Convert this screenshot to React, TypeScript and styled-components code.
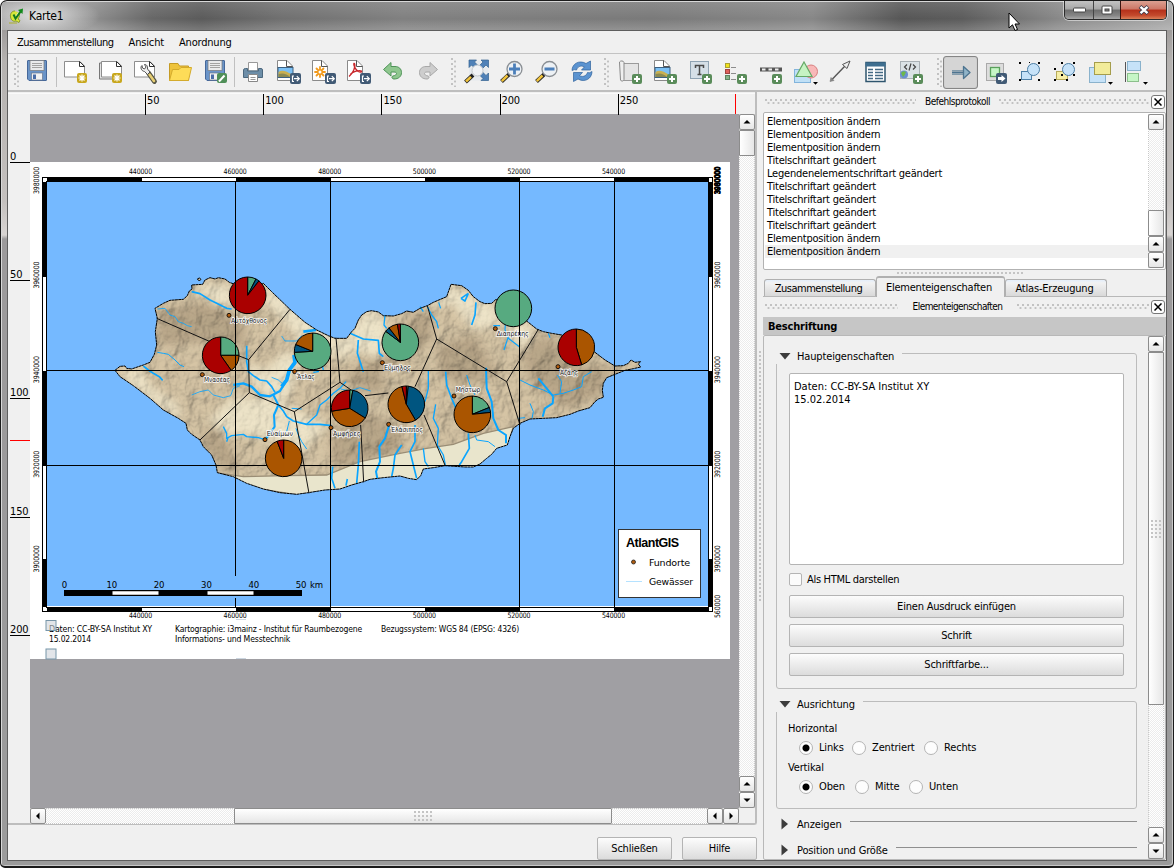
import React from "react";
import styled, { createGlobalStyle, css } from "styled-components";

const UI_FONT = `"DejaVu Sans Condensed", "DejaVu Sans", sans-serif`;

const Global = createGlobalStyle`
  * { box-sizing: border-box; }
  html, body { margin: 0; padding: 0; overflow: hidden; }
  body { font-family: ${UI_FONT}; font-stretch: condensed; font-size: 11px; color: #000; letter-spacing: -0.15px; }
  svg { display: block; }
`;

/* ---------- window chrome ---------- */

const Window = styled.div`
  width: 1174px;
  height: 868px;
  position: relative;
  display: flex;
  flex-direction: column;
  padding: 0 8px 5px 8px;
  background: linear-gradient(#8b8888 0, #b5b2b0 60px, #c4c0be 200px, #d8d4d2 234px, #9c9a9b 238px, #9b9b9b 100%);
  border: 1px solid #1b1b1b;
  border-width: 1px 1px 2px 1px;
  border-radius: 7px 7px 5px 5px;
  box-shadow: inset 1px 1px 0 #d8d8d8, inset -1px -1px 0 #c8c8c8;
  overflow: hidden;
`;

const TitleBar = styled.div`
  height: 28px;
  flex: none;
  margin: 1px -7px 0 -7px;
  padding-left: 7px;
  display: flex;
  align-items: center;
  background:
    radial-gradient(ellipse 60px 20px at 38px 14px, rgba(255, 255, 255, 0.75), rgba(255, 255, 255, 0)),
    linear-gradient(rgba(255, 255, 255, 0.12), rgba(255, 255, 255, 0) 60%, rgba(255, 255, 255, 0.18)),
    linear-gradient(90deg, #9a9a9a 0, #8f8f8f 90px, #676767 150px, #5b5b5b 200px, #707070 280px, #808080 400px, #7a7a7a 650px, #878787 810px, #565656 900px, #5c5c5c 960px, #8a8a8a 1060px, #a8a8a8 1174px);
`;

const TitleText = styled.span`
  font-size: 12px;
  letter-spacing: -0.2px;
  margin-left: 4px;
`;

const WindowButtons = styled.div`
  position: absolute;
  top: 0;
  right: 6px;
  display: flex;
  height: 19px;
  border: 1px solid #2b2b2b;
  border-top: 0;
  border-radius: 0 0 5px 5px;
  overflow: hidden;
  box-shadow: 0 0 0 1px rgba(255, 255, 255, 0.5);
`;

const WindowButton = styled.div<{ $w: number; $close?: boolean }>`
  width: ${(p) => p.$w}px;
  display: flex;
  align-items: center;
  justify-content: center;
  border-left: 1px solid ${(p) => (p.$close ? "#3b1510" : "#444")};
  background: ${(p) =>
    p.$close
      ? "linear-gradient(#dba091 0, #cd7766 45%, #b5301a 50%, #c44a2d 80%, #dc8058 100%)"
      : "linear-gradient(#c3c3c3 0, #a6a6a6 45%, #6e6e6e 50%, #858585 80%, #a9a9a9 100%)"};
  &:first-child { border-left: 0; }
`;

const Cursor = styled.div`
  position: absolute;
  left: 1007px;
  top: 11px;
`;

const Client = styled.div`
  flex: 1;
  min-height: 0;
  display: flex;
  flex-direction: column;
  background: #f0f0f0;
  border: 1px solid #5e5e5e;
  border-width: 1px 1px 1px 0;
  margin: 0 -2px 0 -1px;
  box-shadow: -1px 0 0 #5e5e5e;
`;

const MenuBar = styled.div`
  height: 23px;
  flex: none;
  display: flex;
  align-items: center;
  gap: 15px;
  padding: 1px 0 0 9px;
  border-bottom: 1px solid #c3c3c3;
`;

const MenuItem = styled.span<{ $track?: number }>`
  letter-spacing: ${(p) => p.$track ?? -0.15}px;
`;

/* ---------- tool bar ---------- */

const ToolBar = styled.div`
  height: 38px;
  flex: none;
  display: flex;
  align-items: center;
  padding-left: 6px;
  border-bottom: 2px solid #bebebe;
`;

const Grip = styled.div<{ $before: number; $after?: number }>`
  width: 5px;
  height: 29px;
  flex: none;
  margin-left: ${(p) => p.$before}px;
  margin-right: ${(p) => p.$after ?? 0}px;
  background-image: radial-gradient(circle at 1px 1px, #c2c2c2 1px, transparent 1.2px),
    radial-gradient(circle at 4px 3.5px, #c2c2c2 1px, transparent 1.2px);
  background-size: 5px 5px;
`;

const Separator = styled.div`
  width: 1px;
  height: 30px;
  flex: none;
  margin: 0 1px;
  background: #c0c0c0;
`;

const ToolButton = styled.div<{ $active?: boolean }>`
  width: 35px;
  height: 33px;
  padding-right: 1px;
  flex: none;
  display: flex;
  align-items: center;
  justify-content: center;
  border-radius: 3px;
  ${(p) =>
    p.$active &&
    css`
      border: 1px solid #858585;
      background: #d5d5d5;
      box-shadow: inset 0 0 1px #999;
    `}
`;

const Body = styled.div`
  flex: 1;
  min-height: 0;
  display: flex;
`;

/* ---------- left side ---------- */

const LeftSide = styled.div`
  width: 749px;
  flex: none;
  display: flex;
  flex-direction: column;
`;

const ViewPanel = styled.div`
  height: 733px;
  flex: none;
  display: grid;
  grid-template-columns: 22px 709px 16px;
  grid-template-rows: 22px 694px 16px;
  border-right: 2px solid #bdbdbd;
  border-bottom: 2px solid #bdbdbd;
  border-radius: 0 0 3px 0;
`;

const MapSheetArea = styled.div`
  background: #a09fa3;
  overflow: hidden;
`;

const HRuler = styled.div`
  grid-column: 1 / -1;
  height: 20px;
  margin-top: 1px;
  padding-left: 137px;
  display: flex;
  position: relative;
  border-top: 1px solid #fafafa;
`;

const HTick = styled.div`
  width: 118.2px;
  flex: none;
  height: 21px;
  padding: 0 0 0 1px;
  line-height: 13px;
  border-left: 1px solid #000;
`;

const HCursorMark = styled.div`
  position: absolute;
  left: 727px;
  top: 0;
  width: 1px;
  height: 20px;
  background: #f00;
`;

const VRuler = styled.div`
  position: relative;
  padding-left: 2px;
`;

const VTick = styled.div<{ $first?: boolean }>`
  height: ${(p) => (p.$first ? 49 : 118.2)}px;
  display: flex;
  align-items: flex-end;
  line-height: 11px;
  border-bottom: 1px solid #000;
`;

const VCursorMark = styled.div`
  position: absolute;
  left: 2px;
  top: 326px;
  width: 20px;
  height: 1px;
  background: #f00;
`;

const trackFill = css`
  background: repeating-conic-gradient(#fff 0 25%, #ececec 0 50%) 0 0 / 2px 2px;
`;

const VScroll = styled.div`
  width: 16px;
  height: 100%;
  flex: none;
  display: flex;
  flex-direction: column;
  ${trackFill}
  border-left: 1px dotted #c9c9c9;
  border-right: 1px dotted #c9c9c9;
`;

const HScroll = styled.div`
  grid-column: 2;
  height: 16px;
  display: flex;
  ${trackFill}
  border-top: 1px dotted #c9c9c9;
  border-bottom: 1px dotted #c9c9c9;
`;

const ScrollButton = styled.div<{ $h?: boolean }>`
  width: 16px;
  height: 16px;
  flex: none;
  margin: ${(p) => (p.$h ? "-1px 0" : "0 -1px")};
  display: flex;
  align-items: center;
  justify-content: center;
  border: 1px solid #8c8c8c;
  border-radius: 2px;
  background: linear-gradient(#fff, #e6e6e6);
`;

const Thumb = styled.div<{ $len: number; $h?: boolean }>`
  flex: none;
  ${(p) => (p.$h ? `width: ${p.$len}px; margin: -1px 0;` : `height: ${p.$len}px; margin: 0 -1px;`)}
  display: flex;
  align-items: center;
  justify-content: center;
  border: 1px solid #8c8c8c;
  border-radius: 1px;
  background: linear-gradient(${(p) => (p.$h ? "180deg" : "90deg")}, #fff, #e6e6e6);
`;

const Space = styled.div<{ $size?: number }>`
  flex: ${(p) => (p.$size === undefined ? "1" : `0 0 ${p.$size}px`)};
`;

const Knurl = styled.div<{ $w: number; $h: number }>`
  width: ${(p) => p.$w}px;
  height: ${(p) => p.$h}px;
  background: radial-gradient(circle at 1px 1px, #c4c4c4 1px, transparent 1.2px) 0 0 / 4px 4px;
`;

const DialogButtons = styled.div`
  flex: 1;
  display: flex;
  justify-content: flex-end;
  align-items: flex-end;
  gap: 10px;
`;

const Button = styled.button<{ $w?: number }>`
  width: ${(p) => (p.$w ? `${p.$w}px` : "100%")};
  height: 23px;
  display: block;
  padding: 0;
  font: inherit;
  letter-spacing: -0.2px;
  color: #000;
  border: 1px solid #b4b4b4;
  border-radius: 2px;
  background: linear-gradient(#fcfcfc, #ececec 50%, #dcdcdc);
`;

/* ---------- right side ---------- */

const SplitterV = styled.div`
  width: 6px;
  flex: none;
  display: flex;
  align-items: center;
  justify-content: center;
`;

const Dock = styled.div`
  flex: 1;
  min-width: 0;
  display: flex;
  flex-direction: column;
`;

const DockTitle = styled.div`
  height: 20px;
  flex: none;
  display: flex;
  align-items: center;
  font-size: 10px;
  padding: 0 1px 1px 2px;
`;

const DockDots = styled.div<{ $w: number }>`
  width: ${(p) => p.$w}px;
  height: 5px;
  flex: none;
  background-image: radial-gradient(circle at 1px 1px, #c2c2c2 1px, transparent 1.2px),
    radial-gradient(circle at 3.5px 4px, #c2c2c2 1px, transparent 1.2px);
  background-size: 5px 5px;
`;

const DockName = styled.div<{ $track: number }>`
  flex: 1;
  text-align: center;
  white-space: nowrap;
  letter-spacing: ${(p) => p.$track}px;
`;

const CloseBox = styled.div`
  width: 14px;
  height: 14px;
  margin-left: 2px;
  flex: none;
  display: flex;
  align-items: center;
  justify-content: center;
  border: 1px solid #777;
  border-radius: 3px;
  background: #fdfdfd;
`;

const ListBox = styled.div`
  height: 158px;
  flex: none;
  display: flex;
  border: 1px solid #b2b2b2;
  border-radius: 2px;
  background: #fff;
  padding: 1px;
`;

const ListItems = styled.div`
  flex: 1;
  padding-top: 1px;
`;

const ListItem = styled.div<{ $on?: boolean }>`
  height: 13px;
  line-height: 13px;
  padding-left: 2px;
  letter-spacing: -0.22px;
  background: ${(p) => (p.$on ? "#f0f0f0" : "transparent")};
`;

const SplitterH = styled.div`
  height: 7px;
  flex: none;
  display: flex;
  align-items: center;
  padding-left: 134px;
`;

const Tabs = styled.div`
  height: 20px;
  flex: none;
  padding-left: 1px;
  display: flex;
  align-items: flex-end;
  border-bottom: 1px solid #b8b8b8;
`;

const Tab = styled.div<{ $w: number; $track: number; $active?: boolean }>`
  width: ${(p) => p.$w}px;
  height: ${(p) => (p.$active ? 21 : 17)}px;
  margin-bottom: ${(p) => (p.$active ? -1 : 0)}px;
  display: flex;
  align-items: center;
  justify-content: center;
  letter-spacing: ${(p) => p.$track}px;
  padding-right: 3px;
  border: 1px solid #b0b0b0;
  border-top-width: ${(p) => (p.$active ? 2 : 1)}px;
  border-bottom: 0;
  border-radius: 3px 3px 0 0;
  background: ${(p) => (p.$active ? "#f0f0f0" : "linear-gradient(#e4eefa 0, #f2f2f2 3px, #d9d9d9)")};
`;

const SectionBar = styled.div`
  height: 18px;
  flex: none;
  display: flex;
  align-items: center;
  padding-left: 5px;
  background: #c6c6c6;
  font-weight: bold;
  letter-spacing: -0.2px;
`;

const ScrollArea = styled.div`
  flex: 1;
  min-height: 0;
  display: flex;
  overflow: hidden;
  border: 1px solid #b8b8b8;
  border-radius: 2px;
  padding-right: 1px;
`;

const Properties = styled.div`
  flex: 1;
  min-width: 0;
  padding: 17px 11px 0 12px;
  display: flex;
  flex-direction: column;
`;

const Group = styled.section<{ $h: number; $after: number; $top: number }>`
  position: relative;
  height: ${(p) => p.$h}px;
  flex: none;
  margin-bottom: ${(p) => p.$after}px;
  padding: ${(p) => p.$top}px 12px 0 12px;
  border: 1px solid #bcbcbc;
  border-radius: 3px;
`;

const GroupTitle = styled.div`
  position: absolute;
  left: -2px;
  top: -6px;
  height: 16px;
  padding: 0 8px 0 4px;
  display: flex;
  align-items: center;
  gap: 6px;
  background: #f0f0f0;
`;

const ClosedGroup = styled.div`
  height: 26px;
  flex: none;
  display: flex;
  align-items: center;
  padding-left: 3px;
`;

const ClosedName = styled.span`
  margin-left: 6px;
`;

const ClosedLine = styled.div`
  flex: 1;
  height: 1px;
  margin: -5px 0 0 8px;
  background: #8f8f8f;
`;

const TextBox = styled.div`
  height: 192px;
  padding: 6px 4px;
  line-height: 13px;
  border: 1px solid #b4b4b4;
  border-radius: 2px;
  background: #fff;
  letter-spacing: 0;
`;

const CheckRow = styled.div`
  display: flex;
  align-items: center;
  height: 13px;
  gap: 5px;
  margin: 8px 0 9px;
  letter-spacing: -0.3px;
`;

const CheckBox = styled.div`
  width: 13px;
  height: 13px;
  border: 1px solid #b4b4b4;
  border-radius: 2px;
  background: #fbfbfb;
`;

const ButtonStack = styled.div`
  display: flex;
  flex-direction: column;
  gap: 6px;
`;

const Caption = styled.div`
  height: 14px;
  line-height: 14px;
  margin-left: -1px;
`;

const RadioRow = styled.div`
  display: flex;
  align-items: center;
  height: 13px;
  margin: 5px 0 7px 10px;
`;

const Radio = styled.div<{ $on?: boolean; $w: number }>`
  width: ${(p) => p.$w}px;
  display: flex;
  align-items: center;
  gap: 6px;
  &::before {
    content: "";
    width: 12px;
    height: 12px;
    flex: none;
    border-radius: 50%;
    border: 1px solid #b4b4b4;
    background: ${(p) => (p.$on ? "radial-gradient(circle, #000 3px, #fdfdfd 4px)" : "#fdfdfd")};
  }
`;

/* ---------- small drawings ---------- */

type Dir = "up" | "down" | "left" | "right";
const ARROWS: Record<Dir, string> = {
  up: "M0.5 5.5L4 2L7.5 5.5Z",
  down: "M0.5 2.5L7.5 2.5L4 6Z",
  left: "M5.5 0.5L2 4L5.5 7.5Z",
  right: "M2.5 0.5L6 4L2.5 7.5Z",
};
const Arrow = ({ dir }: { dir: Dir }) => (
  <svg width="8" height="8"><path d={ARROWS[dir]} /></svg>
);

const Expander = ({ open }: { open?: boolean }) => (
  <svg width="12" height="12">
    <path d={open ? "M0.5 3H11.5L6 9.5Z" : "M2.5 0.5V11.5L9 6Z"} fill="#3c3c3c" />
  </svg>
);

const Cross = () => (
  <svg width="8" height="8"><path d="M0.5 0.5L7.5 7.5M7.5 0.5L0.5 7.5" stroke="#000" strokeWidth="1.5" /></svg>
);

const Logo = () => (
  <svg width="16" height="16" viewBox="0 0 16 16">
    <path d="M6 3C2.5 3 1 6 1.5 9C2 12 4 14 7 13L10 14.5L11 12.5L9 11C11 9 10.5 6 10 5" fill="#d8e83a" stroke="#7d8c1e" strokeWidth=".8" />
    <path d="M5 7L6.5 10L9 5.5" fill="none" stroke="#fff" strokeWidth="1.5" />
    <path d="M4.5 6.5L6.5 10.5L12 3" fill="none" stroke="#157a1c" strokeWidth="2" />
    <path d="M9 2L14 .5L13.5 6Z" fill="#128a1c" />
    <path d="M0 15H8" stroke="#a9b02a" strokeWidth="1" />
  </svg>
);

/* ---------- tool bar icons, drawn on a 26 px box ---------- */

const Plus = ({ x = 15, y = 15 }: { x?: number; y?: number }) => (
  <g transform={`translate(${x} ${y})`}>
    <rect width="10" height="10" rx="2" fill="#5a8c5a" />
    <path d="M5 2V8M2 5H8" stroke="#fff" strokeWidth="2" />
  </g>
);
const Star = () => (
  <g transform="translate(15 14)">
    <rect width="10" height="10" rx="2" fill="#c8a71d" />
    <path d="M5 1.5V8.5M1.5 5H8.5M2.5 2.5L7.5 7.5M7.5 2.5L2.5 7.5" stroke="#fff" strokeWidth="1.2" />
  </g>
);
const Export = ({ x = 15, y = 14 }: { x?: number; y?: number }) => (
  <g transform={`translate(${x} ${y})`}>
    <rect width="11" height="11" rx="2" fill="#415a75" />
    <path d="M4 3H2.5V8.5H4M4 5.7H9M6.8 3.2L9.3 5.7L6.8 8.2" fill="none" stroke="#fff" strokeWidth="1.2" />
  </g>
);
const MoveBadge = () => (
  <g transform="translate(12 14)">
    <rect width="11" height="11" rx="2" fill="#415a75" />
    <path d="M2 4H5.5V2L9.5 5.5L5.5 9V7H2Z" fill="#fff" />
  </g>
);
const Disk = () => (
  <g>
    <path d="M4 1.5H22Q22.5 1.5 22.5 2V21Q22.5 21.5 22 21.5H5L3.5 20V2Q3.5 1.5 4 1.5Z" fill="#6a94c8" stroke="#46689a" />
    <rect x="6" y="1.5" width="14" height="10" fill="#e9eaec" stroke="#777" strokeWidth=".7" />
    <path d="M8 4.5H18M8 6.5H18M8 8.5H18" stroke="#9a9a9a" strokeWidth=".9" />
    <rect x="7.5" y="14" width="11" height="7" fill="#f2f2f2" stroke="#6a7a90" strokeWidth=".7" />
    <rect x="9" y="15.5" width="3" height="4.5" fill="#4a6da8" />
  </g>
);
const Sheet = ({ x = 3, y = 2, w = 21, h = 16 }: { x?: number; y?: number; w?: number; h?: number }) => (
  <g>
    <path d={`M${x + 0.5} ${y + 0.5}H${x + w - 5}L${x + w - 0.5} ${y + 5}V${y + h}H${x + 0.5}Z`} fill="#fff" stroke="#8d8d8d" />
    <path d={`M${x + w - 5.5} ${y + 0.5}V${y + 5.5}H${x + w - 0.5}Z`} fill="#fff" stroke="#333" strokeWidth="1" />
  </g>
);
const Page = () => (
  <g>
    <path d="M2.5 1.5H12L17.5 7V21.5H2.5Z" fill="#fff" stroke="#8a8a8a" />
    <path d="M11.5 1.5V7.5H17.5" fill="none" stroke="#555" />
  </g>
);
const Landscape = () => (
  <g>
    <rect x="3" y="8.5" width="15" height="10" fill="#7cc0f4" stroke="#3c6080" />
    <path d="M3.5 13C7 10.5 11 12 17.5 16V18H3.5Z" fill="#c9b052" />
    <path d="M3.5 15C8 13.5 12 15 15 18H3.5Z" fill="#8b8a52" />
  </g>
);
const Lens = ({ cx = 15.5, cy = 10 }: { cx?: number; cy?: number }) => (
  <g>
    <path d={`M${cx - 5.5} ${cy + 5.5}L2.5 22.5`} stroke="#222" strokeWidth="4" />
    <path d="M8.5 16.5L2.8 22.2" stroke="#f0c33c" strokeWidth="2.5" />
    <circle cx={cx} cy={cy} r="7.5" fill="#edf1f5" stroke="#8a8f94" strokeWidth="1.3" />
  </g>
);
const Drop = () => <path d="M21 23H26L23.5 25.7Z" fill="#000" />;

const icons: Record<string, React.ReactNode> = {
  save: <Disk />,
  newDoc: <><Sheet x={2} /><Star /></>,
  duplicate: <><path d="M4 4H2.500V20H21" fill="#e4e4e4" stroke="#777" /><Sheet x={4} w={21} /><Star /></>,
  manager: (
    <>
      <Sheet x={2} />
      <path d="M16.5 14L22.5 22.5" stroke="#554" strokeWidth="4.8" strokeLinecap="round" />
      <path d="M17.5 15.5L22 22" stroke="#e8cf74" strokeWidth="2.6" strokeLinecap="round" />
      <path d="M10 6.5C8 8 9 12 12.5 12.5L15.5 15.5L18 13L15.5 10C16 7 14 5 12.5 5.5L14 8L12.5 10L10.5 9Z" fill="#eee" stroke="#444" strokeWidth=".9" />
    </>
  ),
  open: (
    <>
      <path d="M2.5 4.5H11L12.5 7H21.5V21.5H2.5Z" fill="#eec33c" stroke="#c59b25" />
      <path d="M2.5 21.5L5.5 10.5H12L14 8.5H24.5L21.5 21.5Z" fill="#fddc58" stroke="#d4ab2c" />
    </>
  ),
  saveAs: <><Disk /><g transform="translate(15 14)"><rect width="10" height="10" rx="2" fill="#4f8f58" /><path d="M2 8.5L7.5 2.5" stroke="#fff" strokeWidth="2" /></g></>,
  print: (
    <>
      <path d="M8.500 3.5H17.5V12H8.500Z" fill="#fff" stroke="#999" />
      <path d="M3.500 11Q3.500 9.5 5.5 9.5H7.5V12H18.5V9.5H21Q22.5 9.5 22.5 11V18.5H3.5Z" fill="#6d8ea8" stroke="#4c687e" />
      <path d="M8.5 15.5H17.5V22.5H8.5Z" fill="#fff" stroke="#888" />
      <path d="M10.5 18.500H15.5M10.5 20.5H15.5" stroke="#999" />
    </>
  ),
  exportImage: <><Page /><Landscape /><Export /></>,
  exportSvg: (
    <>
      <Page />
      <g stroke="#f29a1c" strokeWidth="1.8" strokeLinecap="round">
        <path d="M10 8V18M5 13H15M6.5 9.5L13.5 16.5M13.5 9.5L6.5 16.5" />
      </g>
      <circle cx="10" cy="13" r="1.5" fill="#fff" />
      <Export />
    </>
  ),
  exportPdf: (
    <>
      <Page />
      <path d="M4 17.5C8 14 11 8 9.5 4.5C8 3.5 9 9 12.5 12C15 13.5 17 13.5 16.5 12C14 10.5 8 13 5.5 15" fill="none" stroke="#c8262a" strokeWidth="1.3" />
      <Export />
    </>
  ),
  undo: (
    <path d="M3.5 10.5L11 3.5V7.5H15C19 7.5 21.5 10 21.5 13.5C21.5 17.5 18.5 20 14 20C12 20 11 17.5 13 17C15.5 16.5 16.5 15.5 16.5 14.5C16.5 13.5 15.5 13 14 13H11V17Z" fill="#8fc78f" stroke="#4f9358" strokeWidth="1" />
  ),
  redo: (
    <path d="M22.5 10.5L15 3.5V7.5H11C7 7.5 4.5 10 4.5 13.5C4.5 17.5 7.5 20 12 20C14 20 15 17.5 13 17C10.5 16.5 9.5 15.5 9.5 14.5C9.5 13.5 10.5 13 12 13H15V17Z" fill="#cdcdcd" stroke="#a8a8a8" strokeWidth="1" />
  ),
  zoomFull: (
    <>
      <path d="M5 1.5H24.5V21.5H5Z" fill="#e6eaee" />
      <path d="M5 1H12.5L10.5 3L14 6.5L11 9.500L7.5 6L5 8.5ZM24.5 1V8.5L22 6L18.5 9.500L15.5 6.5L19 3L17 1ZM24.5 21.5H17L19 19.5L15.5 16L18.5 13L22 16.5L24.5 14Z" fill="#4f81b8" stroke="#34628f" strokeWidth=".7" />
      <circle cx="13.5" cy="11.5" r="5.5" fill="#f0f2f5" stroke="#c3c8cc" />
      <path d="M9 16L1.5 23" stroke="#222" strokeWidth="4" />
      <path d="M7 17.8L2 22.5" stroke="#f0c33c" strokeWidth="2.5" />
    </>
  ),
  zoomIn: <><Lens /><path d="M15.5 4.5V15.5M10 10H21" stroke="#4b7fba" strokeWidth="2.8" /></>,
  zoomOut: <><Lens /><path d="M10.5 10H20.5" stroke="#4b7fba" strokeWidth="2.8" /></>,
  refresh: (
    <g fill="#5b93d0" stroke="#2e629c" strokeWidth=".7">
      <path d="M3 11.5C3 5 10 .5 17 4.500L21.500 2V11H12.500L15.5 7.8C11 6 8.5 8 7.500 11Q5.500 10 3 11.5Z" />
      <path d="M23 12.500C23 19.500 16 24 9 20L4.500 22.500V13.500H13.500L10.5 16.700C14.5 18.500 17.5 16.500 18.500 13.5Q20.500 14.500 23 12.500Z" />
    </g>
  ),
  addMap: (
    <>
      <rect x="5.5" y="4.5" width="16" height="17" fill="#e4e4e4" stroke="#9a9a9a" />
      <path d="M2.5 3C3.5 1.5 6.5 1.5 7 3.5V20.5C6.5 22.5 4 22.5 3.5 21Z" fill="#efefef" stroke="#888" />
      <Plus />
    </>
  ),
  addImage: <><Page /><Landscape /><Plus /></>,
  addLabel: (
    <>
      <rect x="3.5" y="2.5" width="18" height="17" fill="#d5dfe7" stroke="#8fa3b3" />
      <path d="M8.500 9V6.5H16.500V9M12.500 6.5V15.5M10.500 15.5H14.500" fill="none" stroke="#4a4a4a" strokeWidth="1.5" />
      <Plus />
    </>
  ),
  addLegend: (
    <>
      <rect x="3.500" y="4.5" width="4" height="4" fill="#efe21a" stroke="#aaa033" />
      <rect x="3.500" y="10.5" width="4" height="4" fill="#e0605c" stroke="#a04440" />
      <rect x="3.500" y="16.5" width="4" height="4" fill="#86b489" stroke="#5c8460" />
      <path d="M9 8.5H14M9 14.5H14M9 20.5H14" stroke="#8c8c8c" strokeWidth="1.200" />
      <Plus />
    </>
  ),
  addScalebar: (
    <>
      <path d="M3 10.5H25" stroke="#555" strokeWidth="4" />
      <path d="M5 10.5H8.500M11.500 10.5H15M18 10.5H21.500" stroke="#eee" strokeWidth="2" />
      <Plus />
    </>
  ),
  addShape: (
    <>
      <rect x="2.5" y="10.5" width="16" height="13" fill="#c0e0f6" stroke="#82b4dc" />
      <circle cx="19" cy="12.500" r="6.5" fill="#f8b8b8" stroke="#d87f7f" />
      <path d="M12 3L20 17.5H4Z" fill="#c6f3c3" stroke="#65a865" strokeWidth="1.2" />
      <Drop />
    </>
  ),
  addArrow: (
    <>
      <path d="M4.5 21L18 7" stroke="#555" strokeWidth="1.4" />
      <path d="M23 2L20 9.5L15.5 5.5Z" fill="#eee" stroke="#555" />
      <path d="M3 22.5L4 18.5L7 21.5Z" fill="#888" stroke="#777" strokeWidth=".6" />
    </>
  ),
  addTable: (
    <>
      <rect x="4" y="3.5" width="19" height="19" fill="#fff" stroke="#2f556e" strokeWidth="1.5" />
      <path d="M3.500 5.5H23.500" stroke="#3f6f90" strokeWidth="4" />
      <path d="M6 10.5H11M13 10.5H21M6 13.5H11M13 13.5H21M6 16.5H11M13 16.5H21M6 19.5H11M13 19.5H21" stroke="#446a84" strokeWidth="1.3" />
    </>
  ),
  addHtml: (
    <>
      <rect x="3.5" y="2.5" width="19" height="17" fill="#dbe2e6" stroke="#a9b0b5" />
      <path d="M10 5.5L7.5 8L10 10.5M14 4.5L12 11.5M16 5.5L18.5 8L16 10.5" fill="none" stroke="#444" strokeWidth="1.2" />
      <circle cx="7" cy="15.5" r="4" fill="#6a8fd0" />
      <path d="M4 14Q6 11 9 13Q8 16 6 18Z" fill="#6cb84a" />
      <Plus x={16} y={15} />
    </>
  ),
  selectMove: (
    <g fill="none" stroke="#4d7490" strokeWidth="1.3">
      <path d="M5 11.500H17M5 15.500H17" strokeWidth="1" opacity=".6" />
      <path d="M5 13.500H17" strokeWidth="2" />
      <path d="M16.500 7.500L23 13.500L16.500 19.500Z" fill="#8fb3c8" strokeLinejoin="round" />
    </g>
  ),
  moveContent: (
    <>
      <rect x="4.5" y="4.5" width="17" height="17" fill="#ddd" stroke="#a9a9a9" />
      <rect x="8.500" y="8.5" width="9" height="9" fill="#c6f6c6" stroke="#5aa05c" strokeWidth="1.3" />
      <g transform="translate(2 0)"><MoveBadge /></g>
    </>
  ),
  group: (
    <>
      <rect x="4.5" y="12.5" width="10" height="8" fill="#c6e2f8" stroke="#4d7fa6" />
      <circle cx="16.500" cy="10.5" r="6" fill="#c6e2f8" stroke="#4d7fa6" />
      <path d="M2 3H4V5H2ZM21 3H23V5H21ZM2 20H4V22H2ZM21 20H23V22H21ZM12 3H13V4H12Z" />
    </>
  ),
  ungroup: (
    <>
      <rect x="4.5" y="12.5" width="11" height="8" fill="#f7efa6" stroke="#b8ab5c" />
      <circle cx="16.500" cy="10.5" r="6" fill="#c6e2f8" stroke="#4d7fa6" />
      <path d="M9 3H11V5H9ZM21 3H23V5H21ZM2 9H4V11H2ZM21 15H23V17H21ZM2 20H4V22H2ZM9 15H11V17H9ZM14 20H16V22H14Z" />
    </>
  ),
  raise: (
    <>
      <rect x="2.5" y="8.5" width="16" height="15" fill="#c6e2f8" stroke="#8ab2cc" />
      <rect x="7.5" y="3.5" width="16" height="12" fill="#f2ec9a" stroke="#a59d4c" />
      <Drop />
    </>
  ),
  align: (
    <>
      <path d="M3.5 3V23" stroke="#555" />
      <rect x="5.5" y="2.5" width="13" height="9" fill="#c6e2f8" stroke="#8ab2cc" />
      <rect x="5.5" y="14.5" width="11" height="8" fill="#c6f6c6" stroke="#8cbf8c" />
      <Drop />
    </>
  ),
};

const Tool = ({ name, active }: { name: string; active?: boolean }) => (
  <ToolButton $active={active}>
    <svg width="26" height="26" overflow="visible">{icons[name]}</svg>
  </ToolButton>
);

/* ---------- the map ---------- */

const GREEN = "#57aa80";
const BLUE = "#005580";
const ORANGE = "#aa5500";
const RED = "#aa0000";

type Slice = [string, number];
const Pie = ({ x, y, slices }: { x: number; y: number; slices: Slice[] }) => {
  const r = 55;
  let from = 0;
  const at = (deg: number) => {
    const a = ((deg - 90) * Math.PI) / 180;
    return `${x + r * Math.cos(a)} ${y + r * Math.sin(a)}`;
  };
  return (
    <g stroke="#000" strokeWidth="3">
      {slices.map(([fill, to]) => {
        const start = from;
        from = to;
        return to - start >= 360 ? (
          <circle key={to} cx={x} cy={y} r={r} fill={fill} />
        ) : (
          <path key={to} fill={fill} d={`M${x} ${y}L${at(start)}A${r} ${r} 0 ${to - start > 180 ? 1 : 0} 1 ${at(to)}Z`} />
        );
      })}
    </g>
  );
};

const pies: { x: number; y: number; slices: Slice[] }[] = [
  { x: 443, y: 91, slices: [[GREEN, 27], [BLUE, 38], [RED, 360]] },
  { x: 362, y: 271, slices: [[GREEN, 90], [ORANGE, 145], [RED, 360]] },
  { x: 638, y: 259, slices: [[GREEN, 267], [BLUE, 292], [ORANGE, 360]] },
  { x: 749, y: 430, slices: [[GREEN, 10], [BLUE, 122], [ORANGE, 261], [RED, 360]] },
  { x: 551, y: 580, slices: [[ORANGE, 339], [RED, 360]] },
  { x: 901, y: 232, slices: [[GREEN, 307], [BLUE, 322], [ORANGE, 351], [RED, 360]] },
  { x: 919, y: 418, slices: [[GREEN, 6], [BLUE, 150], [ORANGE, 346], [RED, 360]] },
  { x: 1117, y: 448, slices: [[GREEN, 68], [BLUE, 84], [ORANGE, 360]] },
  { x: 1240, y: 130, slices: [[GREEN, 360]] },
  { x: 1429, y: 247, slices: [[ORANGE, 163], [RED, 360]] },
];

const places: [number, number, string, number, number, number][] = [
  [387, 151, "Αὐτόχθονος", 393, 174, 108],
  [307, 329, "Μνασέας", 312, 352, 78],
  [584, 320, "Ἄτλας", 590, 343, 54],
  [693, 488, "Ἀμφήρες", 699, 512, 82],
  [495, 524, "Εὐαίμων", 500, 513, 79],
  [847, 293, "Εὔμηλος", 852, 316, 80],
  [866, 478, "Ἐλάσιππος", 872, 501, 96],
  [1062, 393, "Μήστωρ", 1067, 382, 74],
  [1186, 191, "Διαπρέπης", 1190, 214, 96],
  [1374, 305, "Ἀζάης", 1380, 330, 54],
];

const COAST =
  "M45 316L60 304L75 303L80 310L95 312L115 305L130 300L150 292L163 268L170 240L166 200L172 160L165 130L190 115L210 106L250 103L262 92L268 78L276 72L275 60L308 58L315 45L330 38L345 42L355 38L375 42L388 52L410 60L440 65L490 55L515 80L570 133L615 172L650 195L685 212L705 220L740 220L755 200L765 190L775 165L785 150L800 140L815 137L835 141L850 152L880 153L905 146L920 138L940 142L960 130L982 122L1000 112L1040 95L1046 78L1053 58L1085 62L1105 76L1120 95L1140 110L1155 116L1175 115L1188 103L1285 172L1310 192L1330 200L1355 205L1385 210L1430 235L1485 262L1515 285L1545 303L1570 302L1585 295L1593 285L1605 292L1622 290L1615 297L1622 306L1600 311L1575 316L1545 328L1520 338L1510 355L1507 375L1510 397L1495 402L1485 410L1470 428L1435 438L1410 448L1370 458L1330 460L1290 462L1260 475L1240 490L1230 515L1222 540L1190 550L1175 568L1160 580L1140 597L1120 606L1095 606L1035 602L1000 608L970 612L962 632L950 644L925 640L900 633L850 638L810 643L790 650L755 660L720 672L675 675L625 683L590 688L540 683L490 672L440 655L400 635L352 623L348 600L335 570L310 545L300 525L275 508L262 495L258 475L235 460L190 435L150 400L100 362L60 335Z";

const LOWLAND =
  "M270 75L300 80L345 110L388 128L400 70L330 60ZM490 55L705 220L685 290L640 240L590 210L560 170L500 110ZM700 222L745 222L790 142L850 150L860 230L845 275L760 250L720 290ZM985 125L1050 60L1140 110L1180 120L1200 180L1120 190L1060 110ZM1220 160L1300 190L1270 260L1230 210ZM560 260L600 290L560 400L520 400L455 350L440 300L500 320ZM520 400L590 440L680 480L600 560L520 520L370 500L330 470L400 400ZM60 325L150 400L240 460L230 420L150 370L120 310Z";

const SHORE =
  "M340 622L430 635L560 632L680 630L780 590L900 565L980 550L1060 538L1150 505L1240 485L1222 545L1120 620L970 625L950 655L625 695L440 665Z";

const HIGHLAND =
  "M170 140L330 110L440 180L430 250L300 230L180 240ZM400 400L520 420L510 500L420 520ZM690 520L770 440L900 480L900 560L700 610ZM840 320L900 290L1000 220L990 140L940 150L870 260L730 330L780 380L860 380ZM1010 240L1120 210L1200 330L1080 360L1020 330ZM1250 230L1360 215L1430 300L1540 310L1500 390L1400 430L1290 350ZM300 540L340 460L420 600L370 620Z";

const rivers: { w: number; d: string }[] = [
  { w: 5, d: "M275 80L300 86L330 105L350 115L380 130L395 132" },
  { w: 2.5, d: "M172 132L195 130L210 150L225 155L235 170L250 175L262 182L275 185" },
  { w: 3, d: "M172 262L190 265L205 268L225 285L240 300L252 305" },
  { w: 5, d: "M130 303L145 315L160 325L178 335L188 346" },
  { w: 2.5, d: "M275 390L300 380L325 375L340 390L370 398L392 392L400 370L420 362" },
  { w: 5, d: "M440 242L440 290L445 320L460 332L480 345L500 348L515 365L525 382" },
  { w: 7, d: "M400 360L430 355L455 365L480 390L510 394L540 378L560 345L568 315L585 295L582 270" },
  { w: 11, d: "M545 365L560 345L568 315L585 292L582 270" },
  { w: 8, d: "M610 200L648 195" },
  { w: 2.5, d: "M545 213L555 228L590 228L605 212" },
  { w: 2.5, d: "M515 337L535 345L550 358" },
  { w: 6, d: "M520 390L535 420L522 450L524 485L510 505L498 522" },
  { w: 4, d: "M495 524L475 518L440 515L430 508L395 512L380 520L380 505L370 485M384 518L380 530" },
  { w: 5, d: "M535 420L550 438L560 455L580 468L620 478L660 478L695 482" },
  { w: 4, d: "M620 478L650 450L660 420L680 405L700 385L720 370L738 350" },
  { w: 3, d: "M575 430L605 432M588 490L595 510L605 530L620 552" },
  { w: 3, d: "M568 468L560 500" },
  { w: 2.5, d: "M722 372L750 378L780 368L812 378" },
  { w: 5, d: "M750 205L790 222L835 226L838 265L850 275M775 225L772 265L790 320" },
  { w: 4, d: "M855 150L852 180L860 190M960 125L970 140M982 125L995 150L1010 170L1015 190" },
  { w: 5, d: "M1083 100L1105 85M1083 100L1095 108L1105 85M1128 112L1125 150L1115 180" },
  { w: 3.5, d: "M1016 112L1022 130M1180 182L1200 182M1216 180L1215 195L1225 215L1212 255M1225 220L1258 245M1345 205L1350 218" },
  { w: 5, d: "M778 530L775 600L770 655M698 605L695 640L705 670M742 642L738 662" },
  { w: 6, d: "M868 478L855 520L838 545L840 590L828 620L832 640" },
  { w: 5, d: "M905 540L885 570L880 610L875 635M945 480L945 530L930 560L940 600L950 640" },
  { w: 4, d: "M985 315L985 370L975 410M1007 418L1000 460L1015 490L1012 540L1030 570L1036 600M970 550L975 590L985 605" },
  { w: 5, d: "M1037 320L1040 360L1055 400L1068 430M1105 505L1108 550L1085 590L1078 600" },
  { w: 3, d: "M1100 330L1110 360L1125 390M1125 510L1130 525L1165 530L1185 545" },
  { w: 6, d: "M1158 308L1160 370L1175 410L1180 460L1195 495L1218 510L1218 535" },
  { w: 3, d: "M1260 345L1290 360L1330 375L1360 390L1390 385L1420 375L1445 365L1450 335L1475 320" },
  { w: 6, d: "M1360 395L1358 415L1335 430L1328 455M1315 340L1340 370L1360 395" },
  { w: 3, d: "M1380 385L1385 350L1372 330M1290 415L1300 440L1296 460M1255 460L1275 458" },
  { w: 4, d: "M655 250L670 315M640 310L655 320L640 322" },
];

const BORDERS =
  "M170 160L335 232M415 272L446 284L570 133M446 284L448 383L300 525M448 383L583 440L720 352L708 218M583 440L627 685M720 352L755 376M795 392L865 384M782 480L791 652M982 122L1010 222L945 365M1010 222L1220 350L1315 193M1220 350L1260 480M972 450L1036 603";

const Island = () => (
  <g transform="translate(100 265) scale(.33333)">
    <clipPath id="coast"><path d={COAST} /></clipPath>
    <g clipPath="url(#coast)">
      <rect x="30" y="20" width="1620" height="690" fill="#d6c8ac" />
      <path d={HIGHLAND} fill="#b3a388" filter="url(#soften)" opacity=".8" />
      <path d={LOWLAND} fill="#efe9d2" filter="url(#soften)" />
      <rect x="30" y="20" width="1620" height="690" filter="url(#relief)" opacity=".6" style={{ mixBlendMode: "multiply" }} />
      <path d={LOWLAND} fill="#eee4c8" filter="url(#soften)" opacity=".45" />
      <path d={SHORE} fill="#e9e5cc" stroke="#9a8d75" strokeWidth="4" />
    </g>
    {rivers.map((r) => (
      <path key={r.d} d={r.d} fill="none" stroke="#0aa5ff" strokeWidth={r.w} strokeLinejoin="round" />
    ))}
    <path d={COAST} fill="none" stroke="#000" strokeWidth="3" strokeDasharray="9 1" />
    <path d="M292 42L298 39L303 43L298 48Z" fill="#cfc3a6" stroke="#000" strokeWidth="3" />
    <path d={BORDERS} fill="none" stroke="#111" strokeWidth="3" />
  </g>
);

const XCOORDS = [440000, 460000, 480000, 500000, 520000, 540000];
const STEP = 94.5;

const MapSheet = () => (
  <svg width="709" height="694" viewBox="30 114 709 694" fontFamily={UI_FONT}>
    <defs>
      <filter id="soften"><feGaussianBlur stdDeviation="14" /></filter>
      <filter id="relief" x="0" y="0" width="100%" height="100%">
        <feTurbulence type="fractalNoise" baseFrequency="0.025 0.02" numOctaves="5" seed="11" />
        <feDiffuseLighting lightingColor="#fff8ee" surfaceScale="15">
          <feDistantLight azimuth="225" elevation="58" />
        </feDiffuseLighting>
      </filter>
    </defs>
    <rect x="30" y="162" width="700" height="497" fill="#fff" />
    <rect x="47" y="181" width="661.5" height="425" fill="#75b9ff" />
    <Island />
    <g stroke="#000" shapeRendering="crispEdges">
      <path d="M235.5 182V576M235.5 598V607M330.5 182V607M519.5 182V607M614.5 182V607M47 370.5H709M47 465.5H709" fill="none" />
      <rect x="42.5" y="177.5" width="670" height="434" fill="none" />
      <path d="M47 181.5H708.5V607.5H46.5V181.5Z" fill="none" />
      <g stroke="none">
        {[0, 2, 4].map((i) => (
          <g key={i}>
            <rect x={47 + i * STEP} y="177" width={STEP} height="4" />
            <rect x={47 + i * STEP} y="607" width={STEP} height="4" />
          </g>
        ))}
        <rect x="614" y="177" width="95" height="4" />
        <rect x="614" y="607" width="95" height="4" />
        {[182, 371, 559].map((y) => (
          <g key={y}>
            <rect x="42" y={y} width="5" height={y === 559 ? 48 : STEP} />
            <rect x="708" y={y} width="5" height={y === 559 ? 48 : STEP} />
          </g>
        ))}
      </g>
    </g>
    <g fontSize="7.5">
      {XCOORDS.map((c, i) => (
        <g key={c} textAnchor="middle">
          <text x={140.5 + i * 94.6} y="174" textLength="23" lengthAdjust="spacingAndGlyphs">{c}</text>
          <text x={140.5 + i * 94.6} y="618" textLength="23" lengthAdjust="spacingAndGlyphs">{c}</text>
        </g>
      ))}
      {[3980000, 3960000, 3940000, 3920000, 3900000].map((c, i) => (
        <g key={c}>
          <text transform={`translate(39 ${194 + i * 94.6}) rotate(-90)`} textLength="27" lengthAdjust="spacingAndGlyphs">{c}</text>
          <text transform={`translate(720 ${194 + i * 94.6}) rotate(-90)`} textLength="27" lengthAdjust="spacingAndGlyphs" stroke="#000" strokeWidth={i === 0 ? 1.2 : 0}>{c}</text>
        </g>
      ))}
      <text transform="translate(720 618) rotate(-90)" textLength="23" lengthAdjust="spacingAndGlyphs">560000</text>
    </g>
    <g transform="translate(100 265) scale(.33333)">
      {pies.map((p) => <Pie key={`${p.x}`} {...p} />)}
      {places.map(([cx, cy, name, tx, ty, w]) => (
        <g key={name}>
          <circle cx={cx} cy={cy} r="6" fill="#b05c10" stroke="#000" strokeWidth="2.5" />
          <text x={tx} y={ty} fontSize="21" textLength={w} lengthAdjust="spacingAndGlyphs" fill="#222" stroke="#fff" strokeWidth="5" strokeOpacity=".85" paintOrder="stroke">{name}</text>
        </g>
      ))}
      <path d="M1240 70V190M405 240V300M0 316H1640" stroke="#000" strokeWidth="0" />
    </g>
    <path d="M519.5 285V335M235.5 270V380" stroke="#000" shapeRendering="crispEdges" />
    <g fontSize="9.5" textAnchor="middle">
      {[0, 10, 20, 30, 40, 50].map((n, i) => <text key={n} x={64.5 + i * 47.3} y="588">{n}</text>)}
      <text x="316.5" y="588">km</text>
    </g>
    <rect x="64" y="590" width="238" height="6" />
    <path d="M112.5 593H158.5M207.5 593H253.5" stroke="#fff" strokeWidth="3.5" />
    <rect x="618.5" y="529.5" width="82" height="68" fill="#fff" stroke="#333" />
    <text x="626" y="547" fontFamily="Liberation Sans, sans-serif" fontSize="12.5" fontWeight="bold" textLength="53">AtlantGIS</text>
    <circle cx="633.5" cy="562" r="2" fill="#b05c10" stroke="#222" strokeWidth=".8" />
    <path d="M626 581.5H642" stroke="#b5e2ff" />
    <g fontSize="9.5">
      <text x="649" y="566" textLength="41" lengthAdjust="spacingAndGlyphs">Fundorte</text>
      <text x="649" y="585" textLength="44" lengthAdjust="spacingAndGlyphs">Gewässer</text>
    </g>
    <g fontSize="8">
      <text x="49" y="632" textLength="103" lengthAdjust="spacingAndGlyphs">Daten: CC-BY-SA Institut XY</text>
      <text x="49" y="642" textLength="42" lengthAdjust="spacingAndGlyphs">15.02.2014</text>
      <text x="175" y="632" textLength="187" lengthAdjust="spacingAndGlyphs">Kartographie: i3mainz - Institut für Raumbezogene</text>
      <text x="175" y="642" textLength="115" lengthAdjust="spacingAndGlyphs">Informations- und Messtechnik</text>
      <text x="381" y="632" textLength="138" lengthAdjust="spacingAndGlyphs">Bezugssystem: WGS 84 (EPSG: 4326)</text>
    </g>
    <g fill="#cfd3da" fillOpacity=".6" stroke="#7795a8">
      <rect x="46" y="620.5" width="10" height="10" />
      <rect x="46" y="649" width="10" height="10" />
    </g>
    <path d="M236 619.5H246M236 658.5H246" stroke="#ccd6e0" />
  </svg>
);

/* ---------- application ---------- */

const HISTORY = [
  "Elementposition ändern",
  "Elementposition ändern",
  "Elementposition ändern",
  "Titelschriftart geändert",
  "Legendenelementschriftart geändert",
  "Titelschriftart geändert",
  "Titelschriftart geändert",
  "Titelschriftart geändert",
  "Titelschriftart geändert",
  "Elementposition ändern",
  "Elementposition ändern",
];

export default function App() {
  return (
    <>
      <Global />
      <Window>
        <TitleBar>
          <Logo />
          <TitleText>Karte1</TitleText>
        </TitleBar>
        <WindowButtons>
          <WindowButton $w={28}>
            <svg width="13" height="6"><rect x=".5" y="1" width="12" height="4" rx="1" fill="#fff" stroke="#444" /></svg>
          </WindowButton>
          <WindowButton $w={27}>
            <svg width="12" height="10">
              <rect x="1" y="1" width="10" height="8" rx="1" fill="#fff" stroke="#444" />
              <rect x="4" y="4" width="4" height="2" fill="#888" stroke="#444" />
            </svg>
          </WindowButton>
          <WindowButton $w={46} $close>
            <svg width="12" height="10">
              <path d="M2 1.5L10 8.5M10 1.5L2 8.5" stroke="#3b3b4b" strokeWidth="4" />
              <path d="M2.5 1.8L9.5 8.2M9.5 1.8L2.5 8.2" stroke="#fff" strokeWidth="2.4" />
            </svg>
          </WindowButton>
        </WindowButtons>
        <Cursor>
          <svg width="13" height="20"><path d="M1 1V16L4.5 12.8L7 18.5L9.5 17.5L7 12H11.5Z" fill="#fff" stroke="#000" /></svg>
        </Cursor>
        <Client>
          <MenuBar>
            <MenuItem $track={-0.5}>Zusammmenstellung</MenuItem>
            <MenuItem>Ansicht</MenuItem>
            <MenuItem $track={-0.2}>Anordnung</MenuItem>
          </MenuBar>
          <ToolBar>
            <Grip $before={0} $after={1} />
            <Tool name="save" />
            <Separator />
            {["newDoc", "duplicate", "manager", "open", "saveAs"].map((n) => <Tool key={n} name={n} />)}
            <Separator />
            {["print", "exportImage", "exportSvg", "exportPdf", "undo", "redo"].map((n) => <Tool key={n} name={n} />)}
            <Grip $before={5} $after={4} />
            {["zoomFull", "zoomIn", "zoomOut", "refresh"].map((n) => <Tool key={n} name={n} />)}
            <Grip $before={4} $after={4} />
            {["addMap", "addImage", "addLabel", "addLegend", "addScalebar", "addShape", "addArrow", "addTable", "addHtml"].map((n) => <Tool key={n} name={n} />)}
            <Grip $before={9} $after={1} />
            <Tool name="selectMove" active />
            {["moveContent", "group", "ungroup", "raise", "align"].map((n) => <Tool key={n} name={n} />)}
          </ToolBar>
          <Body>
            <LeftSide>
              <ViewPanel>
                <HRuler>
                  {[50, 100, 150, 200, 250].map((n) => <HTick key={n}>{n}</HTick>)}
                  <HCursorMark />
                </HRuler>
                <VRuler>
                  {[0, 50, 100, 150, 200].map((n) => <VTick key={n} $first={n === 0}>{n}</VTick>)}
                  <VCursorMark />
                </VRuler>
                <MapSheetArea><MapSheet /></MapSheetArea>
                <VScroll>
                  <ScrollButton><Arrow dir="up" /></ScrollButton>
                  <Thumb $len={26} />
                  <Space />
                  <ScrollButton><Arrow dir="up" /></ScrollButton>
                  <ScrollButton><Arrow dir="down" /></ScrollButton>
                </VScroll>
                <HScroll>
                  <ScrollButton $h><Arrow dir="left" /></ScrollButton>
                  <Space $size={188} />
                  <Thumb $len={378} $h><Knurl $w={18} $h={11} /></Thumb>
                  <Space />
                  <ScrollButton $h><Arrow dir="left" /></ScrollButton>
                  <ScrollButton $h><Arrow dir="right" /></ScrollButton>
                </HScroll>
              </ViewPanel>
              <DialogButtons>
                <Button $w={75}>Schließen</Button>
                <Button $w={75}>Hilfe</Button>
              </DialogButtons>
            </LeftSide>
            <SplitterV><Knurl $w={3} $h={250} /></SplitterV>
            <Dock>
              <DockTitle>
                <DockDots $w={151} />
                <DockName $track={-0.45}>Befehlsprotokoll</DockName>
                <DockDots $w={150} />
                <CloseBox><Cross /></CloseBox>
              </DockTitle>
              <ListBox>
                <ListItems>
                  {HISTORY.map((h, i) => <ListItem key={i} $on={i === HISTORY.length - 1}>{h}</ListItem>)}
                </ListItems>
                <VScroll>
                  <ScrollButton><Arrow dir="up" /></ScrollButton>
                  <Space />
                  <Thumb $len={26} />
                  <ScrollButton><Arrow dir="up" /></ScrollButton>
                  <ScrollButton><Arrow dir="down" /></ScrollButton>
                </VScroll>
              </ListBox>
              <SplitterH><Knurl $w={128} $h={3} /></SplitterH>
              <Tabs>
                <Tab $w={112} $track={-0.5}>Zusammenstellung</Tab>
                <Tab $w={129} $track={-0.25} $active>Elementeigenschaften</Tab>
                <Tab $w={102} $track={-0.2}>Atlas-Erzeugung</Tab>
              </Tabs>
              <DockTitle>
                <DockDots $w={133} />
                <DockName $track={-0.55}>Elementeigenschaften</DockName>
                <DockDots $w={132} />
                <CloseBox><Cross /></CloseBox>
              </DockTitle>
              <SectionBar>Beschriftung</SectionBar>
              <ScrollArea>
                <Properties>
                  <Group $h={336} $after={12} $top={19}>
                    <GroupTitle><Expander open />Haupteigenschaften</GroupTitle>
                    <TextBox>Daten: CC-BY-SA Institut XY<br />15.02.2014</TextBox>
                    <CheckRow><CheckBox />Als HTML darstellen</CheckRow>
                    <ButtonStack>
                      <Button>Einen Ausdruck einfügen</Button>
                      <Button>Schrift</Button>
                      <Button>Schriftfarbe...</Button>
                    </ButtonStack>
                  </Group>
                  <Group $h={108} $after={2} $top={20}>
                    <GroupTitle><Expander open />Ausrichtung</GroupTitle>
                    <Caption>Horizontal</Caption>
                    <RadioRow>
                      <Radio $w={53} $on>Links</Radio>
                      <Radio $w={72}>Zentriert</Radio>
                      <Radio $w={60}>Rechts</Radio>
                    </RadioRow>
                    <Caption>Vertikal</Caption>
                    <RadioRow>
                      <Radio $w={56} $on>Oben</Radio>
                      <Radio $w={54}>Mitte</Radio>
                      <Radio $w={60}>Unten</Radio>
                    </RadioRow>
                  </Group>
                  <ClosedGroup><Expander /><ClosedName>Anzeigen</ClosedName><ClosedLine /></ClosedGroup>
                  <ClosedGroup><Expander /><ClosedName>Position und Größe</ClosedName><ClosedLine /></ClosedGroup>
                </Properties>
                <VScroll>
                  <ScrollButton><Arrow dir="up" /></ScrollButton>
                  <Thumb $len={353}><Knurl $w={11} $h={18} /></Thumb>
                  <Space />
                  <ScrollButton><Arrow dir="up" /></ScrollButton>
                  <ScrollButton><Arrow dir="down" /></ScrollButton>
                </VScroll>
              </ScrollArea>
            </Dock>
          </Body>
        </Client>
      </Window>
    </>
  );
}
